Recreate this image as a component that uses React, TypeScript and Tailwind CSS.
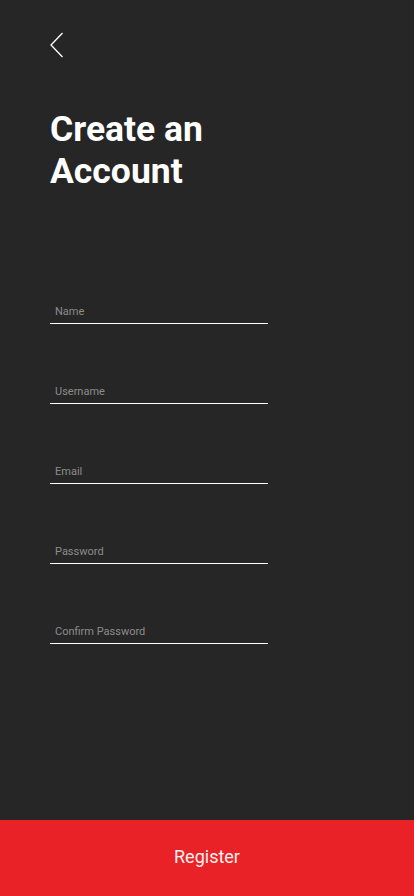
import React from "react";

const fields = ["Name", "Username", "Email", "Password", "Confirm Password"];

export default function App() {
  return (
    <div
      className="flex min-h-[896px] w-[414px] flex-col bg-[#262626] text-white"
      style={{ fontFamily: "Roboto, 'Noto Sans', sans-serif" }}
    >
      <div className="flex flex-1 flex-col px-[50px]">
        <button className="mt-[32px] flex h-[26px] w-[14px] items-center" aria-label="Back">
          <svg width="14" height="26" viewBox="0 0 14 26" fill="none">
            <path d="M12.5 1 L1 13 L12.5 25" stroke="#ffffff" strokeWidth="1.3" />
          </svg>
        </button>
        <h1 className="mt-[50px] text-[35.5px] font-bold leading-[42px]">
          Create an
          <br />
          Account
        </h1>
        <div className="mt-[114px] flex w-[218px] flex-col gap-[62px]">
          {fields.map((f) => (
            <div key={f} className="flex h-[18px] items-start border-b-[1.5px] border-white pl-[5px]">
              <span className="text-[11px] leading-[12px] text-[#8c8c8c]">{f}</span>
            </div>
          ))}
        </div>
      </div>
      <button className="flex h-[76px] w-full items-center justify-center bg-[#e82227] pb-[4px] text-[18px] text-[#fdf0f0]">
        Register
      </button>
    </div>
  );
}
